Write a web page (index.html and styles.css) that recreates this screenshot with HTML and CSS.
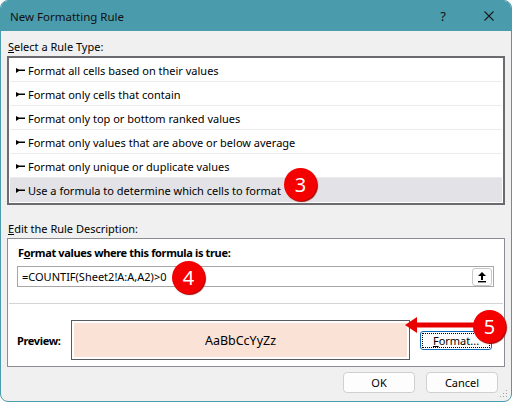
FILE: index.html
```html
<!DOCTYPE html>
<html lang="en">
<head>
  <meta charset="UTF-8" />
  <title>New Formatting Rule</title>
  <link rel="stylesheet" href="styles.css">
</head>
<body>
  <div class="window">
    <div class="titlebar">
      <span class="title">New Formatting Rule</span>
      <span class="help">?</span>
      <svg class="close" width="10" height="10" viewBox="0 0 10 10"><path d="M0.5 0.5 L9.5 9.5 M9.5 0.5 L0.5 9.5" stroke="#1a1a1a" stroke-width="1.1" fill="none"/></svg>
    </div>

    <div class="content">
      <div class="label"><u>S</u>elect a Rule Type:</div>
      <div class="rule-list">
        <div class="rule"><svg class="mark" width="9" height="5" viewBox="0 0 9 5"><path d="M0 0 L3 1.5 L9 1.5 L9 3 L3 3 L0 5 Z" fill="#000"/></svg>Format all cells based on their values</div>
        <div class="rule"><svg class="mark" width="9" height="5" viewBox="0 0 9 5"><path d="M0 0 L3 1.5 L9 1.5 L9 3 L3 3 L0 5 Z" fill="#000"/></svg>Format only cells that contain</div>
        <div class="rule"><svg class="mark" width="9" height="5" viewBox="0 0 9 5"><path d="M0 0 L3 1.5 L9 1.5 L9 3 L3 3 L0 5 Z" fill="#000"/></svg>Format only top or bottom ranked values</div>
        <div class="rule"><svg class="mark" width="9" height="5" viewBox="0 0 9 5"><path d="M0 0 L3 1.5 L9 1.5 L9 3 L3 3 L0 5 Z" fill="#000"/></svg>Format only values that are above or below average</div>
        <div class="rule"><svg class="mark" width="9" height="5" viewBox="0 0 9 5"><path d="M0 0 L3 1.5 L9 1.5 L9 3 L3 3 L0 5 Z" fill="#000"/></svg>Format only unique or duplicate values</div>
        <div class="rule selected"><svg class="mark" width="9" height="5" viewBox="0 0 9 5"><path d="M0 0 L3 1.5 L9 1.5 L9 3 L3 3 L0 5 Z" fill="#000"/></svg>Use a formula to determine which cells to format<span class="badge badge-3">3</span></div>
      </div>

      <div class="label label-edit"><u>E</u>dit the Rule Description:</div>
      <div class="desc">
        <div class="desc-top">
          <div class="bold">F<u>o</u>rmat values where this formula is true:</div>
          <div class="formula">
            <span class="formula-text">=COUNTIF(Sheet2!A:A,A2)&gt;0</span>
            <span class="badge badge-4">4</span>
            <span class="collapse">
              <svg width="10" height="12" viewBox="0 0 10 12"><path d="M5 1 L9 5 L6 5 L6 9 L4 9 L4 5 L1 5 Z" fill="#000"/><rect x="1" y="10" width="8" height="1.4" fill="#000"/></svg>
            </span>
          </div>
        </div>
        <div class="preview-row">
          <div class="bold preview-label">Preview:</div>
          <div class="preview-box"><div class="preview-fill">AaBbCcYyZz</div></div>
          <div class="format-btn"><span class="dotted"><u>F</u>ormat...</span></div>
          <svg class="arrow" width="80" height="16" viewBox="0 0 80 16"><path d="M0 8 L12 0 L12 5.5 L80 5.5 L80 10.5 L12 10.5 L12 16 Z" fill="#e80000"/></svg>
          <span class="badge badge-5">5</span>
        </div>
      </div>

      <div class="buttons">
        <div class="btn">OK</div>
        <div class="btn">Cancel</div>
      </div>
    </div>
    <svg class="grip" width="8" height="8" viewBox="0 0 8 8"><g fill="#a0a0a0"><rect x="6" y="0" width="1" height="1"/><rect x="3" y="3" width="1" height="1"/><rect x="6" y="3" width="1" height="1"/><rect x="0" y="6" width="1" height="1"/><rect x="3" y="6" width="1" height="1"/><rect x="6" y="6" width="1" height="1"/></g></svg>
  </div>
</body>
</html>
```

FILE: styles.css
```css
* {
  box-sizing: border-box;
}

body {
  margin: 0;
  background: #ffffff;
  font-family: "Noto Sans", "Open Sans", sans-serif;
  font-size: 11px;
  color: #000;
}

.window {
  width: 512px;
  height: 402px;
  border: 1px solid #4a9bab;
  border-radius: 8px;
  background: #f0f0f0;
  overflow: hidden;
  display: flex;
  flex-direction: column;
  position: relative;
}

.titlebar {
  height: 30px;
  flex-shrink: 0;
  background: #4a9bab;
  display: flex;
  align-items: center;
  padding: 0 0 0 9px;
}

.title {
  flex: 1;
  font-size: 11.5px;
  color: #111;
}

.help {
  font-size: 13px;
  color: #111;
  margin-right: 38px;
}

.close {
  margin-right: 17px;
}

.content {
  padding: 7px 6px 0 6px;
  display: flex;
  flex-direction: column;
}

.label {
  height: 18px;
  line-height: 18px;
  margin-left: 1px;
}

.rule-list {
  border: 2px solid #6b6b6f;
  background: #fff;
  padding: 0 1px 1px 1px;
}

.rule {
  height: 24px;
  border-bottom: 1px solid #ececec;
  display: flex;
  align-items: center;
  padding: 1px 0 0 6px;
  position: relative;
}

.rule.selected {
  background: #e2e2e7;
  border-bottom: none;
}

.mark {
  margin-right: 3px;
}

.label-edit {
  margin-top: 15px;
}

.desc {
  border: 1px solid #8c8c94;
  background: #fff;
  height: 129px;
  display: flex;
  flex-direction: column;
}

.desc-top {
  padding: 5px 9px 0 8px;
  height: 65px;
  flex-shrink: 0;
  border-bottom: 1px solid #d4d4d4;
  margin: 0 1px;
}

.bold {
  font-weight: bold;
  height: 18px;
  line-height: 18px;
  letter-spacing: -0.35px;
}

.desc-top .bold {
  margin-left: 1px;
}

.formula {
  margin-top: 4px;
  height: 21px;
  border: 1px solid #a6a6a6;
  display: flex;
  align-items: center;
  position: relative;
}

.formula-text {
  flex: 1;
  padding-left: 4px;
}

.collapse {
  width: 20px;
  height: 18px;
  border: 1px solid #c8c8c8;
  border-radius: 3px;
  background: #fdfdfd;
  display: flex;
  align-items: center;
  justify-content: center;
  margin-right: 1px;
}

.preview-row {
  flex: 1;
  display: flex;
  align-items: center;
  padding: 10px 0 0 9px;
  position: relative;
}

.preview-label {
  width: 54px;
  margin-top: 1px;
}

.preview-box {
  width: 339px;
  height: 40px;
  border: 1px solid #5a5a5a;
  padding: 2px;
}

.preview-fill {
  height: 100%;
  background: #fbe2d6;
  display: flex;
  align-items: center;
  justify-content: center;
  font-size: 12.5px;
  padding-top: 1px;
}

.format-btn {
  margin-left: 10px;
  width: 72px;
  height: 19px;
  border: 1px solid #0f6cbd;
  border-radius: 3px;
  background: #fdfdfd;
  padding: 1px;
}

.dotted {
  display: block;
  height: 15px;
  line-height: 14px;
  border: 1px dotted #000;
  text-align: center;
}

.arrow {
  position: absolute;
  left: 397px;
  top: 13px;
}

.buttons {
  display: flex;
  justify-content: flex-end;
  gap: 11px;
  margin-top: 5px;
  padding-right: 7px;
}

.btn {
  width: 72px;
  height: 21px;
  line-height: 19px;
  text-align: center;
  border: 1px solid #d0d0d0;
  border-radius: 4px;
  background: #fdfdfd;
}

.badge {
  position: absolute;
  width: 33px;
  height: 33px;
  border-radius: 50%;
  background: #f40000;
  box-shadow: 1px 1px 1px #a00000;
  color: #fff;
  font-size: 20px;
  line-height: 33px;
  text-align: center;
}

.badge-3 {
  left: 274px;
  top: -10px;
}

.badge-4 {
  left: 154px;
  top: -6px;
}

.badge-5 {
  left: 465px;
  top: 6px;
}

.grip {
  position: absolute;
  right: 3px;
  bottom: 3px;
}
```
